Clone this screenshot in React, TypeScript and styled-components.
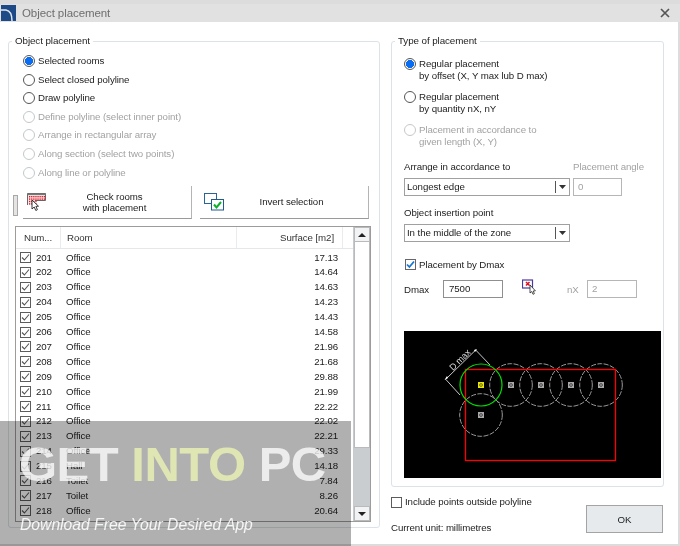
import React from 'react'
import styled, { createGlobalStyle } from 'styled-components'

const GlobalStyle = createGlobalStyle`
  html, body {
    margin: 0;
    padding: 0;
    background: #dcdcdc;
  }
  * {
    box-sizing: border-box;
  }
`

const Page = styled.div`
  position: relative;
  width: 680px;
  height: 546px;
  overflow: hidden;
  padding-top: 4px;
  background: #dcdcdc;
  font-family: "Liberation Sans", sans-serif;
  font-size: 9.7px;
  letter-spacing: -0.08px;
  color: #1c1c1c;
  filter: blur(0.3px);
`

const TitleBar = styled.div`
  display: flex;
  align-items: center;
  height: 18px;
  background: #e1e1e1;
  padding: 0 10px 0 1px;
`

const TitleText = styled.span`
  margin-left: 6px;
  font-size: 11.5px;
  color: #6e6e6e;
  flex: 1;
`

const Body = styled.div`
  display: flex;
  align-items: flex-start;
  width: 678px;
  height: 522px;
  background: #fff;
  padding: 13px 0 0 8px;
`

const Group = styled.fieldset<{ $width: number; $height: number }>`
  width: ${(p) => p.$width}px;
  height: ${(p) => p.$height}px;
  margin: 0;
  padding: 0;
  border: 1px solid #dce3e8;
  border-radius: 3px;
`

const Legend = styled.legend`
  margin-left: 3px;
  padding: 0 3px;
  font-size: 9.8px;
  line-height: 12px;
`

const LeftColumn = styled.div`
  padding: 8px 0 0 6px;
`

const RadioList = styled.div`
  display: flex;
  flex-direction: column;
  padding-left: 8px;
`

const RadioRow = styled.label<{ $off?: boolean; $height?: number }>`
  display: flex;
  align-items: flex-start;
  height: ${(p) => p.$height ?? 18.6}px;
  gap: 3px;
  line-height: 11.5px;
  color: ${(p) => (p.$off ? '#a2a2a2' : '#1c1c1c')};
`

const RadioDot = styled.span<{ $on?: boolean; $off?: boolean }>`
  flex: none;
  width: 12px;
  height: 12px;
  border-radius: 50%;
  border: 1px solid ${(p) => (p.$off ? '#c4c8ca' : '#555')};
  background: ${(p) => (p.$on ? 'radial-gradient(circle, #0a6cf0 0 3.8px, #fff 4.2px)' : '#fff')};
`

const ActionRow = styled.div`
  position: relative;
  display: flex;
  gap: 8px;
  margin: 1px 0 0 8px;
  width: 346px;
`

const Grip = styled.span`
  position: absolute;
  left: -10px;
  top: 9px;
  width: 5px;
  height: 21px;
  border: 1px solid #a8a8a8;
  background: #e4e4e4;
`

const ActionButton = styled.button`
  display: flex;
  align-items: center;
  width: 169px;
  height: 33px;
  padding: 0 0 0 4px;
  border: none;
  border-right: 1px solid #b4b4b4;
  border-bottom: 1px solid #9a9a9a;
  background: #fff;
  font: inherit;
  letter-spacing: inherit;
  color: inherit;
`

const ActionLabel = styled.span`
  flex: 1;
  text-align: center;
  line-height: 11.5px;
  padding-right: 9px;
`

const ListBox = styled.div`
  display: flex;
  width: 356px;
  height: 296px;
  margin: 7px 0 0 0;
  border: 1px solid #9c9c9c;
`

const ListMain = styled.div`
  flex: 1;
`

const ListHeader = styled.div`
  display: grid;
  grid-template-columns: 45px 176px 106px 10px;
  height: 22px;
  margin-bottom: 1px;
  border-bottom: 1px solid #e4e8eb;
`

const HeaderCell = styled.div<{ $right?: boolean; $pad: number }>`
  line-height: 21px;
  border-right: 1px solid #e8ecef;
  text-align: ${(p) => (p.$right ? 'right' : 'left')};
  padding: ${(p) => (p.$right ? `0 ${p.$pad}px 0 0` : `0 0 0 ${p.$pad}px`)};
  color: #333;
`

const Row = styled.div`
  display: grid;
  grid-template-columns: 16px 30px 1fr 62px;
  align-items: center;
  height: 14.9px;
  padding-left: 4px;
  line-height: 14px;
`

const RowValue = styled.span`
  text-align: right;
  padding-right: 15px;
`

const CheckBox = styled.span<{ $blue?: boolean }>`
  display: inline-flex;
  align-items: center;
  justify-content: center;
  flex: none;
  width: 11px;
  height: 11px;
  border: 1px solid ${(p) => (p.$blue ? '#666' : '#5c5c5c')};
  background: #fff;
`

const ScrollBar = styled.div`
  display: flex;
  flex-direction: column;
  width: 17px;
  border-left: 1px solid #c8cbcd;
  background: #c9cdcf;
`

const ScrollButton = styled.div`
  display: flex;
  align-items: center;
  justify-content: center;
  height: 15px;
  background: #f2f3f4;
  border: 1px solid #b8babc;
`

const ScrollThumb = styled.div`
  height: 206px;
  background: #fff;
  border: 1px solid #b8babc;
  border-top: none;
`

const ScrollTrack = styled.div`
  flex: 1;
`

const Arrow = styled.span<{ $up?: boolean }>`
  width: 0;
  height: 0;
  border-left: 4px solid transparent;
  border-right: 4px solid transparent;
  ${(p) => (p.$up ? 'border-bottom: 4px solid #222;' : 'border-top: 4px solid #222;')}
`

const RightSide = styled.div`
  margin-left: 11px;
`

const RightColumn = styled.div`
  padding: 11px 0 0 12px;
`

const RightRadios = styled.div`
  display: flex;
  flex-direction: column;
`

const FieldRow = styled.div`
  display: flex;
  align-items: flex-end;
  gap: 3px;
  margin-bottom: 11px;
`

const Field = styled.div<{ $off?: boolean }>`
  display: flex;
  flex-direction: column;
  gap: 5px;
  line-height: 12px;
  color: ${(p) => (p.$off ? '#a2a2a2' : '#1c1c1c')};
`

const Select = styled.div`
  display: flex;
  align-items: center;
  width: 166px;
  height: 18px;
  border: 1px solid #a0a0a0;
  padding-left: 2px;
  color: #1c1c1c;
`

const SelectText = styled.span`
  flex: 1;
`

const SelectArrow = styled.span`
  display: flex;
  align-items: center;
  justify-content: center;
  width: 14px;
  height: 12px;
  border-left: 1px solid #555;
`

const TextBox = styled.div<{ $width: number; $off?: boolean }>`
  width: ${(p) => p.$width}px;
  height: 18px;
  border: 1px solid ${(p) => (p.$off ? '#b6b6b6' : '#8f8f8f')};
  padding-left: ${(p) => (p.$off ? 4 : 5)}px;
  line-height: 16px;
  color: ${(p) => (p.$off ? '#a2a2a2' : '#1c1c1c')};
`

const DmaxCheck = styled.label`
  display: flex;
  align-items: center;
  gap: 3px;
  margin: 16px 0 0 1px;
  height: 12px;
`

const DmaxRow = styled.div`
  display: flex;
  align-items: center;
  margin-top: 10px;
  height: 18px;
`

const DmaxLabel = styled.span<{ $off?: boolean; $width: number }>`
  width: ${(p) => p.$width}px;
  color: ${(p) => (p.$off ? '#a2a2a2' : '#1c1c1c')};
`

const PickIcon = styled.svg`
  margin: -5px 31px 0 19px;
  flex: none;
`

const PreviewSlot = styled.div`
  padding-left: 12px;
`

const Preview = styled.svg`
  display: block;
  margin: 33px 0 0 0;
  background: #000;
`

const BottomRow = styled.div`
  display: flex;
  justify-content: space-between;
  width: 272px;
  margin-top: 9px;
`

const BottomInfo = styled.div`
  display: flex;
  flex-direction: column;
  gap: 14px;
  line-height: 12px;
`

const IncludeRow = styled.label`
  display: flex;
  align-items: center;
  gap: 3px;
`

const OkButton = styled.button`
  width: 77px;
  height: 28px;
  margin-top: 9px;
  border: 1px solid #a4a4a4;
  background: #e6eaec;
  font: inherit;
  color: inherit;
`

const Watermark = styled.div`
  position: absolute;
  left: 0;
  top: 421px;
  width: 351px;
  height: 125px;
  font-family: "Liberation Sans", sans-serif;
  letter-spacing: normal;
  color: #fff;

  &::before {
    content: '';
    position: absolute;
    inset: 0;
    background: #b0b0b0;
    mix-blend-mode: multiply;
  }
`

const WatermarkTitle = styled.div`
  position: relative;
  margin: 14px 0 0 19px;
  font-size: 49px;
  letter-spacing: -0.5px;
  line-height: 58px;
  font-weight: 700;
  white-space: nowrap;
  color: rgba(255, 255, 255, 0.76);
`

const WatermarkAccent = styled.span`
  color: rgba(232, 239, 180, 0.85);
`

const WatermarkSub = styled.div`
  position: relative;
  margin: 22px 0 0 20px;
  font-size: 15.7px;
  font-style: italic;
  line-height: 20px;
  color: rgba(255, 255, 255, 0.88);
`

const rooms: [number, string, string][] = [
  [201, 'Office', '17.13'],
  [202, 'Office', '14.64'],
  [203, 'Office', '14.63'],
  [204, 'Office', '14.23'],
  [205, 'Office', '14.43'],
  [206, 'Office', '14.58'],
  [207, 'Office', '21.96'],
  [208, 'Office', '21.68'],
  [209, 'Office', '29.88'],
  [210, 'Office', '21.99'],
  [211, 'Office', '22.22'],
  [212, 'Office', '22.02'],
  [213, 'Office', '22.21'],
  [214, 'Office', '29.33'],
  [215, 'Hall', '14.18'],
  [216, 'Toilet', '7.84'],
  [217, 'Toilet', '8.26'],
  [218, 'Office', '20.64'],
]

const placementModes = [
  { label: 'Selected rooms', on: true },
  { label: 'Select closed polyline' },
  { label: 'Draw polyline' },
  { label: 'Define polyline (select inner point)', off: true },
  { label: 'Arrange in rectangular array', off: true },
  { label: 'Along section (select two points)', off: true },
  { label: 'Along line or polyline', off: true },
]

const Tick: React.FC<{ blue?: boolean }> = ({ blue }) => (
  <svg width="9" height="9" viewBox="0 0 9 9">
    <path d="M1 4.5 L3.4 7 L8 1.5" fill="none" stroke={blue ? '#1877d2' : '#555'} strokeWidth={blue ? 1.8 : 1.1} />
  </svg>
)

const AppIcon = () => (
  <svg width="15" height="16" viewBox="0 0 15 16">
    <rect width="15" height="16" fill="#1d4a86" />
    <path d="M0 5 H5 Q11 6 11 16" fill="none" stroke="#dfe7f2" strokeWidth="1.5" />
  </svg>
)

const CloseIcon = () => (
  <svg width="10" height="10" viewBox="0 0 10 10">
    <path d="M1 1 L9 9 M9 1 L1 9" stroke="#555" strokeWidth="1.7" />
  </svg>
)

const CheckRoomsIcon = () => {
  const dots = []
  for (let y = 0; y < 4; y++) {
    for (let x = 0; x < 8; x++) {
      if (y > 1 && x > 3) continue
      dots.push(<rect key={`${x}-${y}`} x={2 + x * 2.1} y={3 + y * 2.4} width="1.3" height="1.4" fill="#e01525" />)
    }
  }
  return (
    <svg width="20" height="18" viewBox="0 0 20 18">
      <path d="M0.5 12 V0.5 H18.5 V7.5 H8" fill="#fbeaea" stroke="#666" />
      <rect x="0.5" y="0.5" width="18" height="1.6" fill="#777" />
      {dots}
      <path d="M5 7 L5 16 L7.2 14 L8.8 17.5 L10.4 16.7 L8.9 13.4 L11.5 13.2 Z" fill="#fff" stroke="#222" strokeWidth="0.9" />
    </svg>
  )
}

const InvertIcon = () => (
  <svg width="20" height="18" viewBox="0 0 20 18">
    <rect x="0.5" y="0.5" width="12" height="10" fill="#fff" stroke="#2a6496" />
    <rect x="7.5" y="6.5" width="12" height="10.5" fill="#fff" stroke="#1f5a8c" />
    <path d="M10 11.5 L12.5 14.5 L17 9" fill="none" stroke="#0eb02c" strokeWidth="2" />
  </svg>
)

const PickPointIcon = () => (
  <PickIcon width="14" height="16" viewBox="0 0 14 16">
    <rect x="0.5" y="1" width="10" height="8" fill="#fff" stroke="#4a3aa0" strokeWidth="1.2" />
    <path d="M4 3 L7.5 6.5 M7.5 3 L4 6.5" stroke="#e01020" strokeWidth="1.5" />
    <path d="M8 6 L8 14 L9.8 12.5 L11 15.3 L12.4 14.6 L11.2 12 L13.4 11.8 Z" fill="#fff" stroke="#222" strokeWidth="0.8" />
  </PickIcon>
)

const SmallArrow = () => (
  <svg width="7" height="4" viewBox="0 0 7 4">
    <path d="M0 0 H7 L3.5 4 Z" fill="#333" />
  </svg>
)

const circles = [
  [107, 54],
  [137, 54],
  [167, 54],
  [197, 54],
  [77, 84],
]

const PlacementPreview = () => (
  <Preview width="257" height="147" viewBox="0 0 257 147">
    {circles.map(([cx, cy]) => (
      <g key={`${cx}-${cy}`}>
        <circle cx={cx} cy={cy} r="21.3" fill="none" stroke="#9a9a9a" strokeDasharray="5 1.4" />
        <rect x={cx - 3} y={cy - 3} width="6" height="6" fill="#a8a8a8" />
        <circle cx={cx} cy={cy} r="1.4" fill="none" stroke="#222" strokeWidth="0.7" />
      </g>
    ))}
    <rect x="61.5" y="38.5" width="150" height="91" fill="none" stroke="#ff0000" strokeWidth="1.3" />
    <circle cx="77" cy="54" r="21" fill="none" stroke="#00e000" strokeWidth="1.2" />
    <rect x="74" y="51" width="6" height="6" fill="#e8e800" />
    <circle cx="77" cy="54" r="1.4" fill="none" stroke="#333" strokeWidth="0.7" />
    <path d="M41.7 48.3 L71.7 19 M41.7 48.3 L56 64 M71.7 19 L86 34" fill="none" stroke="#ddd" strokeWidth="0.9" />
    <path d="M40.5 49 L44 47 L43 45 Z M73 18 L70 19 L71 21 Z" fill="#fff" />
    <text x="49" y="40" fill="#ddd" fontSize="9" fontFamily="Liberation Sans, sans-serif" transform="rotate(-45 49 40)">
      D max
    </text>
  </Preview>
)

const App: React.FC = () => {
  return (
    <Page>
      <GlobalStyle />
      <TitleBar>
        <AppIcon />
        <TitleText>Object placement</TitleText>
        <CloseIcon />
      </TitleBar>
      <Body>
        <Group $width={372} $height={493}>
          <Legend>Object placement</Legend>
          <LeftColumn>
            <RadioList>
              {placementModes.map((m) => (
                <RadioRow key={m.label} $off={m.off}>
                  <RadioDot $on={m.on} $off={m.off} />
                  {m.label}
                </RadioRow>
              ))}
            </RadioList>
            <ActionRow>
              <Grip />
              <ActionButton>
                <CheckRoomsIcon />
                <ActionLabel>
                  Check rooms
                  <br />
                  with placement
                </ActionLabel>
              </ActionButton>
              <ActionButton>
                <InvertIcon />
                <ActionLabel>Invert selection</ActionLabel>
              </ActionButton>
            </ActionRow>
            <ListBox>
              <ListMain>
                <ListHeader>
                  <HeaderCell $pad={8}>Num...</HeaderCell>
                  <HeaderCell $pad={6}>Room</HeaderCell>
                  <HeaderCell $right $pad={8}>
                    Surface [m2]
                  </HeaderCell>
                </ListHeader>
                {rooms.map(([num, room, surface]) => (
                  <Row key={num}>
                    <CheckBox>
                      <Tick />
                    </CheckBox>
                    <span>{num}</span>
                    <span>{room}</span>
                    <RowValue>{surface}</RowValue>
                  </Row>
                ))}
              </ListMain>
              <ScrollBar>
                <ScrollButton>
                  <Arrow $up />
                </ScrollButton>
                <ScrollThumb />
                <ScrollTrack />
                <ScrollButton>
                  <Arrow />
                </ScrollButton>
              </ScrollBar>
            </ListBox>
          </LeftColumn>
        </Group>
        <RightSide>
          <Group $width={273} $height={452}>
            <Legend>Type of placement</Legend>
            <RightColumn>
              <RightRadios>
                <RadioRow $height={33}>
                  <RadioDot $on />
                  <span>
                    Regular placement
                    <br />
                    by offset (X, Y max lub D max)
                  </span>
                </RadioRow>
                <RadioRow $height={33}>
                  <RadioDot />
                  <span>
                    Regular placement
                    <br />
                    by quantity nX, nY
                  </span>
                </RadioRow>
                <RadioRow $off $height={37}>
                  <RadioDot $off />
                  <span>
                    Placement in accordance to
                    <br />
                    given length (X, Y)
                  </span>
                </RadioRow>
              </RightRadios>
              <FieldRow>
                <Field>
                  Arrange in accordance to
                  <Select>
                    <SelectText>Longest edge</SelectText>
                    <SelectArrow>
                      <SmallArrow />
                    </SelectArrow>
                  </Select>
                </Field>
                <Field $off>
                  Placement angle
                  <TextBox $off $width={49}>
                    0
                  </TextBox>
                </Field>
              </FieldRow>
              <Field>
                Object insertion point
                <Select>
                  <SelectText>In the middle of the zone</SelectText>
                  <SelectArrow>
                    <SmallArrow />
                  </SelectArrow>
                </Select>
              </Field>
              <DmaxCheck>
                <CheckBox $blue>
                  <Tick blue />
                </CheckBox>
                Placement by Dmax
              </DmaxCheck>
              <DmaxRow>
                <DmaxLabel $width={39}>Dmax</DmaxLabel>
                <TextBox $width={60}>7500</TextBox>
                <PickPointIcon />
                <DmaxLabel $off $width={20}>
                  nX
                </DmaxLabel>
                <TextBox $off $width={50}>
                  2
                </TextBox>
              </DmaxRow>
            </RightColumn>
            <PreviewSlot>
              <PlacementPreview />
            </PreviewSlot>
          </Group>
          <BottomRow>
            <BottomInfo>
              <IncludeRow>
                <CheckBox />
                Include points outside polyline
              </IncludeRow>
              <span>Current unit: millimetres</span>
            </BottomInfo>
            <OkButton>OK</OkButton>
          </BottomRow>
        </RightSide>
      </Body>
      <Watermark>
        <WatermarkTitle>
          GET <WatermarkAccent>INTO</WatermarkAccent> PC
        </WatermarkTitle>
        <WatermarkSub>Download Free Your Desired App</WatermarkSub>
      </Watermark>
    </Page>
  )
}

export default App
